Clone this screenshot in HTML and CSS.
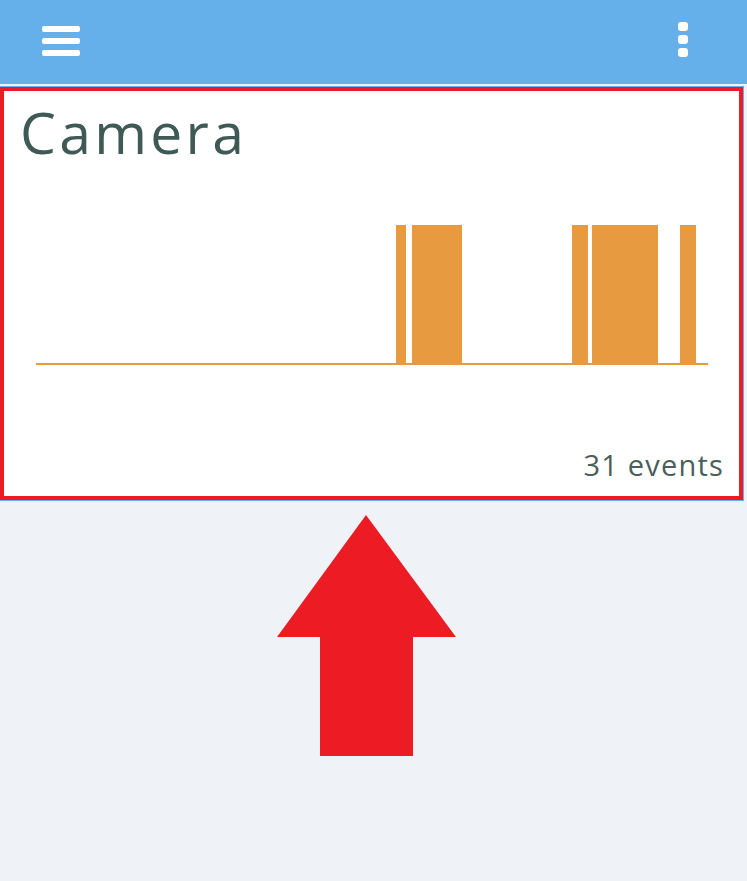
FILE: index.html
```html
<!DOCTYPE html>
<html>
<head>
<meta charset="utf-8">
<link rel="stylesheet" href="styles.css">
</head>
<body>
<header class="topbar">
  <button class="icon-btn menu" aria-label="Menu">
    <span class="bar"></span><span class="bar"></span><span class="bar"></span>
  </button>
  <button class="icon-btn more" aria-label="More">
    <span class="dot"></span><span class="dot"></span><span class="dot"></span>
  </button>
</header>
<main class="content">
  <section class="card">
    <h1 class="card-title">Camera</h1>
    <svg class="chart" viewBox="0 0 743 200" width="743" height="200">
      <rect x="36" y="183" width="672" height="2" fill="#E89A40"/>
      <rect x="396" y="45" width="10" height="140" fill="#E89A40"/>
      <rect x="412" y="45" width="50" height="140" fill="#E89A40"/>
      <rect x="572" y="45" width="16" height="140" fill="#E89A40"/>
      <rect x="592" y="45" width="66" height="140" fill="#E89A40"/>
      <rect x="680" y="45" width="16" height="140" fill="#E89A40"/>
    </svg>
    <div class="card-footer">31 events</div>
    <div class="highlight"></div>
  </section>
  <svg class="pointer" viewBox="0 0 180 242" width="180" height="242">
    <polygon points="89,0 179,122 136,122 136,241 43,241 43,122 0,122" fill="#ED1C24"/>
  </svg>
</main>
</body>
</html>
```
FILE: styles.css
```css
html, body {
  margin: 0;
  padding: 0;
}
body {
  background: #EFF3F7;
  font-family: "Open Sans", "Lato", sans-serif;
  width: 747px;
  height: 881px;
  overflow: hidden;
  position: relative;
}
.topbar {
  height: 84px;
  background: #65AFEA;
  display: flex;
  align-items: flex-start;
  justify-content: space-between;
  padding: 0 59px 0 42px;
}
.icon-btn {
  background: none;
  border: 0;
  padding: 0;
  display: flex;
  flex-direction: column;
}
.menu {
  margin-top: 26px;
  gap: 6px;
}
.bar {
  display: block;
  width: 38px;
  height: 6px;
  border-radius: 2px;
  background: #fff;
}
.more {
  margin-top: 22px;
  gap: 4px;
}
.dot {
  display: block;
  width: 10px;
  height: 9px;
  border-radius: 3px;
  background: #fff;
}
.content {
  padding-top: 2px;
}
.card {
  position: relative;
  width: 743px;
  background: #fff;
  border: 1px solid #65AFEA;
  border-left: 0;
  display: flex;
  flex-direction: column;
}
.card-title {
  margin: 0;
  padding: 17px 0 0 20px;
  font-size: 57px;
  line-height: 57px;
  font-weight: 400;
  letter-spacing: 3.3px;
  color: #3F5A55;
}
.chart {
  display: block;
  margin-top: 19px;
}
.card-footer {
  margin-top: 70px;
  padding: 0 19px 21px 0;
  text-align: right;
  font-size: 29px;
  line-height: 29px;
  letter-spacing: 1.2px;
  color: #4A5F5B;
}
.highlight {
  position: absolute;
  left: 0;
  top: 0;
  right: 0;
  bottom: 0;
  border: 4px solid #ED1C24;
  pointer-events: none;
}
.pointer {
  position: absolute;
  left: 277px;
  top: 515px;
}
```
